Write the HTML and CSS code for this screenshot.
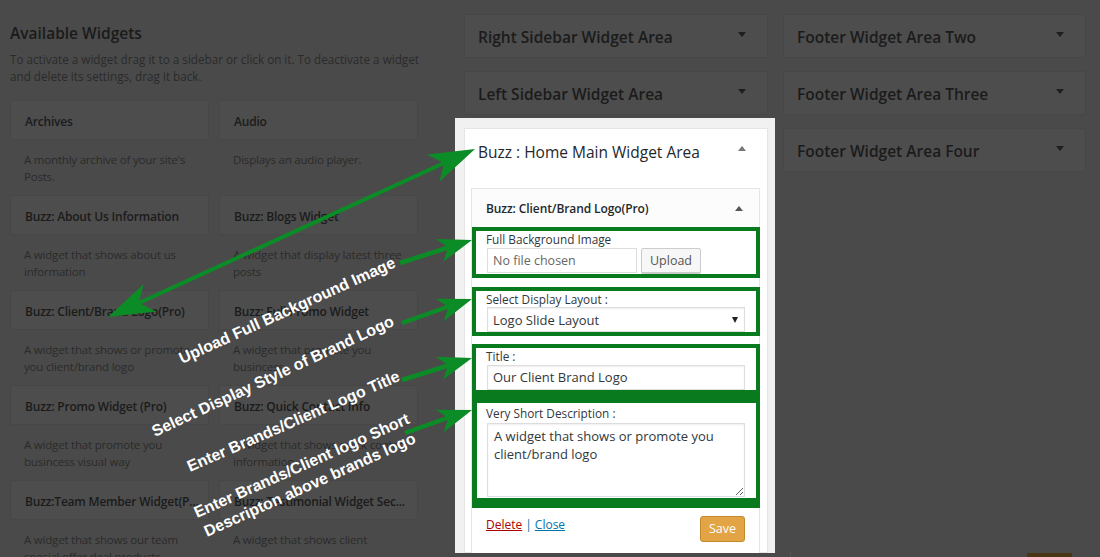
FILE: index.html
```html
<!DOCTYPE html>
<html lang="en">
<head>
<meta charset="utf-8">
<title>Widgets</title>
<link rel="stylesheet" href="styles.css">
</head>
<body>
<div class="screen">
  <section class="available">
    <h2 class="avail-title">Available Widgets</h2>
    <p class="intro">To activate a widget drag it to a sidebar or click on it. To deactivate a widget<br>and delete its settings, drag it back.</p>
    <div class="widget-grid">
      <div class="widget"><div class="widget-title">Archives</div><div class="widget-desc">A monthly archive of your site's<br>Posts.</div></div>
      <div class="widget"><div class="widget-title">Audio</div><div class="widget-desc">Displays an audio player.</div></div>
      <div class="widget"><div class="widget-title">Buzz: About Us Information</div><div class="widget-desc">A widget that shows about us<br>information</div></div>
      <div class="widget"><div class="widget-title">Buzz: Blogs Widget</div><div class="widget-desc">A widget that display latest three<br>posts</div></div>
      <div class="widget"><div class="widget-title">Buzz: Client/Brand Logo(Pro)</div><div class="widget-desc">A widget that shows or promote<br>you client/brand logo</div></div>
      <div class="widget"><div class="widget-title">Buzz: Full Promo Widget</div><div class="widget-desc">A widget that promote you<br>busincess</div></div>
      <div class="widget"><div class="widget-title">Buzz: Promo Widget (Pro)</div><div class="widget-desc">A widget that promote you<br>busincess visual way</div></div>
      <div class="widget"><div class="widget-title">Buzz: Quick Contact Info</div><div class="widget-desc">A widget that shows quick contact<br>information</div></div>
      <div class="widget"><div class="widget-title">Buzz:Team Member Widget(P...</div><div class="widget-desc">A widget that shows our team<br>special offer deal products</div></div>
      <div class="widget"><div class="widget-title">Buzz: Testimonial Widget Sec...</div><div class="widget-desc">A widget that shows client</div></div>
    </div>
  </section>

  <section class="areas">
    <div class="area-closed"><h3 class="area-name">Right Sidebar Widget Area</h3><span class="tri-down"></span></div>
    <div class="area-closed"><h3 class="area-name">Left Sidebar Widget Area</h3><span class="tri-down"></span></div>
    <div class="focus">
      <div class="area-open">
        <div class="open-head"><h3 class="open-name">Buzz : Home Main Widget Area</h3><span class="tri-up"></span></div>
        <div class="widget-edit">
          <div class="edit-head"><span class="edit-name">Buzz: Client/Brand Logo(Pro)</span><span class="tri-up small"></span></div>
          <div class="hl hl-image">
            <div class="lbl">Full Background Image</div>
            <div class="file-row">
              <div class="file-input">No file chosen</div>
              <div class="btn-upload">Upload</div>
            </div>
          </div>
          <div class="hl hl-select">
            <div class="lbl">Select Display Layout :</div>
            <div class="select"><span>Logo Slide Layout</span><span class="sel-arrow"></span></div>
          </div>
          <div class="hl hl-title">
            <div class="lbl">Title :</div>
            <div class="text-input">Our Client Brand Logo</div>
          </div>
          <div class="hl hl-desc">
            <div class="lbl">Very Short Description :</div>
            <textarea class="textarea" readonly>A widget that shows or promote you client/brand logo</textarea>
          </div>
          <div class="actions">
            <div class="links"><span class="del">Delete</span><span class="sep">|</span><span class="close">Close</span></div>
            <div class="btn-save">Save</div>
          </div>
        </div>
      </div>
    </div>
  </section>

  <section class="areas right">
    <div class="area-closed"><h3 class="area-name">Footer Widget Area Two</h3><span class="tri-down"></span></div>
    <div class="area-closed"><h3 class="area-name">Footer Widget Area Three</h3><span class="tri-down"></span></div>
    <div class="area-closed"><h3 class="area-name">Footer Widget Area Four</h3><span class="tri-down"></span></div>
    <div class="ghost"><span class="ghost-btn"></span></div>
  </section>

  <svg class="annotations" width="1100" height="557" viewBox="0 0 1100 557" xmlns="http://www.w3.org/2000/svg">
    <g class="arrow">
      <line x1="128" y1="308" x2="455" y2="158" stroke-width="4"/>
      <path transform="translate(475 149) rotate(-24.6)" d="M0 0 L-46 -15 L-34 0 L-46 15 Z"/>
      <path transform="translate(108 317) rotate(155.4)" d="M0 0 L-46 -15 L-34 0 L-46 15 Z"/>

      <line x1="400" y1="263" x2="450" y2="247" stroke-width="4.5"/>
      <path transform="translate(472 240) rotate(-17.7)" d="M0 0 L-34 -12 L-25 0 L-34 12 Z"/>

      <line x1="402" y1="323" x2="450" y2="306" stroke-width="4.5"/>
      <path transform="translate(472 299) rotate(-18.9)" d="M0 0 L-34 -12 L-25 0 L-34 12 Z"/>

      <line x1="402" y1="380" x2="450" y2="365" stroke-width="4.5"/>
      <path transform="translate(472 358) rotate(-17.4)" d="M0 0 L-34 -12 L-25 0 L-34 12 Z"/>

      <line x1="405" y1="433" x2="450" y2="417" stroke-width="4.5"/>
      <path transform="translate(472 410) rotate(-18.9)" d="M0 0 L-34 -12 L-25 0 L-34 12 Z"/>
    </g>
    <g class="notes">
      <text x="182" y="364" transform="rotate(-24.4 182 364)">Upload Full Background Image</text>
      <text x="155" y="437" transform="rotate(-25 155 437)">Select Display Style of Brand Logo</text>
      <text x="190" y="472" transform="rotate(-23.5 190 472)">Enter Brands/Client Logo Title</text>
      <text x="197" y="518" transform="rotate(-24 197 518)">Enter Brands/Client logo Short</text>
      <text x="207" y="537" transform="rotate(-24.3 207 537)">Descripton above brands logo</text>
    </g>
  </svg>
</div>
</body>
</html>
```

FILE: styles.css
```css
* { box-sizing: border-box; }
html, body { margin: 0; padding: 0; }
body {
  background: #4a4a4a;
  font-family: "Open Sans", "Noto Sans", sans-serif;
  overflow: hidden;
}
.screen {
  position: relative;
  width: 1100px;
  height: 557px;
  display: flex;
  align-items: flex-start;
  padding-left: 10px;
  overflow: hidden;
}

/* available widgets */
.available { width: 408px; padding-top: 22px; flex: none; }
.avail-title {
  margin: 0;
  font-size: 15.5px;
  font-weight: 600;
  line-height: 22px;
  color: #1a1a1a;
}
.intro {
  margin: 7px 0 0;
  font-size: 11.7px;
  line-height: 17px;
  color: #2a2a2a;
  white-space: nowrap;
}
.widget-grid {
  margin-top: 15px;
  display: grid;
  grid-template-columns: 199px 199px;
  column-gap: 10px;
}
.widget-title {
  height: 40px;
  background: #4d4d4d;
  border: 1px solid #474747;
  padding: 2px 0 0 14px;
  font-size: 12px;
  letter-spacing: -0.2px;
  font-weight: 600;
  line-height: 37px;
  color: #1b1b1b;
  white-space: nowrap;
}
.widget-desc {
  height: 55px;
  padding: 11px 0 0 14px;
  font-size: 11.5px;
  letter-spacing: -0.2px;
  line-height: 17px;
  color: #2b2b2b;
  white-space: nowrap;
}

/* sidebar columns */
.areas {
  width: 304px;
  margin-left: 46px;
  padding-top: 14px;
  display: flex;
  flex-direction: column;
  gap: 13px;
  flex: none;
}
.areas.right { width: 303px; margin-left: 15px; height: 557px; }
.area-closed {
  height: 44px;
  background: #4d4d4d;
  border: 1px solid #474747;
  display: flex;
  align-items: center;
  justify-content: space-between;
  padding: 2px 21px 0 13px;
}
.area-name {
  margin: 0;
  font-size: 15.5px;
  font-weight: 600;
  color: #1b1b1b;
  white-space: nowrap;
}
.tri-down {
  width: 0; height: 0;
  border-left: 4px solid transparent;
  border-right: 4px solid transparent;
  border-top: 5px solid #1e1e1e;
  align-self: flex-start;
  margin-top: 15px;
}
.tri-up {
  width: 0; height: 0;
  border-left: 4px solid transparent;
  border-right: 4px solid transparent;
  border-bottom: 5px solid #72777c;
}

/* highlighted open area */
.focus {
  margin: -10px -7px 0 -9px;
  padding: 10px 7px 0 9px;
  background: #f1f1f1;
  height: 435px;
  overflow: hidden;
}
.area-open {
  background: #fff;
  border: 1px solid #e5e5e5;
  height: 100%;
}
.open-head {
  height: 59px;
  padding: 13px 21px 0 13px;
  display: flex;
  justify-content: space-between;
  align-items: flex-start;
}
.open-name {
  margin: 0;
  font-size: 15.5px;
  font-weight: 400;
  line-height: 20px;
  color: #23282d;
}
.open-head .tri-up { margin-top: 4px; }
.widget-edit {
  margin: 0 7px 0 6px;
  border: 1px solid #e5e5e5;
  background: #fff;
  height: 400px;
}
.edit-head {
  height: 38px;
  background: #fcfcfc;
  display: flex;
  align-items: center;
  justify-content: space-between;
  padding: 0 16px 0 14px;
}
.edit-name {
  font-size: 12px;
  letter-spacing: -0.1px;
  font-weight: 600;
  color: #23282d;
}
.tri-up.small { border-bottom-color: #555; }

.hl {
  border: 4px solid #0a7a1e;
  margin-right: -1px;
  padding: 0 11px 0 10px;
  background: #fff;
}
.lbl {
  font-size: 11.8px;
  line-height: 16px;
  color: #32373c;
  white-space: nowrap;
}
.hl-image { padding-bottom: 1px; }
.hl-image .lbl { line-height: 17px; }
.file-row { display: flex; gap: 4px; padding-left: 1px; }
.file-input {
  width: 150px;
  height: 25px;
  border: 1px solid #ddd;
  padding-left: 5px;
  font-size: 12.5px;
  line-height: 23px;
  color: #666;
}
.btn-upload {
  width: 60px;
  height: 25px;
  border: 1px solid #ccc;
  background: #f7f7f7;
  border-radius: 2px;
  font-size: 12.5px;
  line-height: 23px;
  text-align: center;
  color: #555;
  box-shadow: 0 1px 0 #ccc;
}
.hl-select { margin-top: 9px; }
.select {
  height: 25px;
  margin-left: 1px;
  border: 1px solid #ddd;
  box-shadow: inset 0 1px 2px rgba(0,0,0,.07);
  display: flex;
  align-items: center;
  justify-content: space-between;
  padding: 0 6px 0 5px;
  font-size: 13px;
  color: #32373c;
}
.sel-arrow {
  width: 0; height: 0;
  border-left: 3px solid transparent;
  border-right: 3px solid transparent;
  border-top: 6px solid #222;
}
.hl-title { margin-top: 8px; border-bottom: 0; }
.text-input {
  height: 25px;
  margin: 1px 0 0 1px;
  border: 1px solid #ddd;
  box-shadow: inset 0 1px 2px rgba(0,0,0,.07);
  padding-left: 5px;
  font-size: 13px;
  line-height: 23px;
  color: #32373c;
}
.hl-desc {
  border-width: 13px 4px 10px 5px;
  padding: 2px 11px 1px 9px;
}
.hl-desc .lbl { line-height: 17px; }
.textarea {
  display: block;
  width: calc(100% - 1px);
  height: 74px;
  margin: 1px 0 0 1px;
  border: 1px solid #ddd;
  box-shadow: inset 0 1px 2px rgba(0,0,0,.07);
  padding: 3px 6px;
  font-family: "Open Sans", "Noto Sans", sans-serif;
  font-size: 13px;
  line-height: 18px;
  color: #32373c;
  resize: vertical;
  outline: none;
}
.actions {
  display: flex;
  justify-content: space-between;
  align-items: flex-start;
  padding: 8px 14px 0 14px;
}
.links { font-size: 12px; line-height: 17px; color: #0073aa; display: flex; gap: 3px; }
.del { color: #a00; text-decoration: underline; }
.sep { color: #0073aa; }
.close { color: #0073aa; text-decoration: underline; }
.btn-save {
  height: 26px;
  width: 45px;
  text-align: center;
  border: 1px solid #c38a2c;
  border-radius: 3px;
  background: #e2a444;
  color: #fff;
  font-size: 12.5px;
  line-height: 24px;
}

/* bottom right remnant */
.ghost {
  margin-top: auto;
  margin-left: 7px;
  height: 5px;
  border-left: 1px solid #555;
  display: flex;
  justify-content: flex-end;
  padding-right: 14px;
  padding-top: 1px;
}
.ghost-btn { width: 45px; height: 4px; background: #4a3515; }

/* annotations overlay */
.annotations {
  position: absolute;
  left: 0;
  top: 0;
  pointer-events: none;
}
.arrow line { stroke: #0c8c27; stroke-linecap: butt; }
.arrow path { fill: #0c8c27; }
.notes text {
  font-family: "Liberation Sans", Arial, sans-serif;
  font-weight: bold;
  font-size: 16px;
  fill: #fff;
}
```
